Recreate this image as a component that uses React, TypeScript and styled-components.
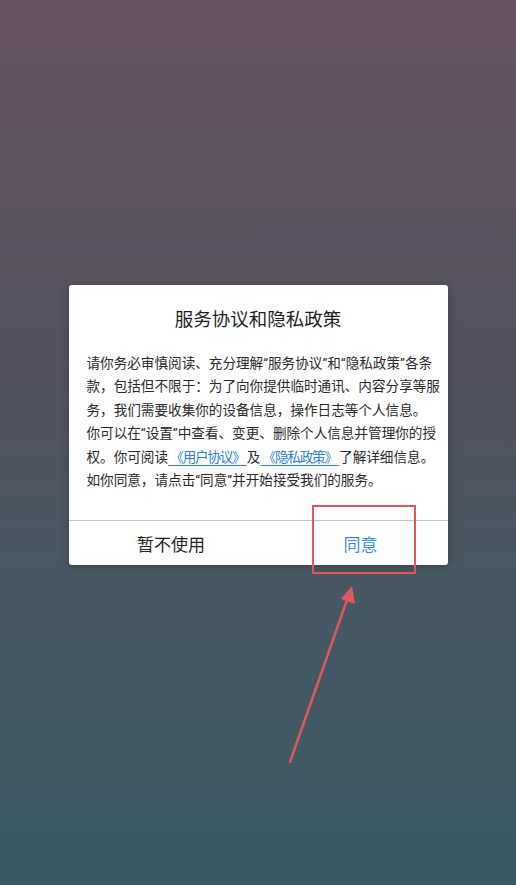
import React from 'react';
import styled, {createGlobalStyle} from 'styled-components';

const GlobalStyle = createGlobalStyle`
    html, body {
        margin: 0;
        padding: 0;
    }

    body {
        font-family: Roboto, 'Noto Sans CJK SC', sans-serif;
    }
`;

const Screen = styled.div`
    position: relative;
    width: 516px;
    height: 885px;
    overflow: hidden;
    background: linear-gradient(180deg, #665261 0%, #54525f 40%, #485863 65%, #3a5a66 100%);
    display: flex;
    flex-direction: column;
    align-items: center;
    padding-top: 285px;
    box-sizing: border-box;
`;

const Dialog = styled.div`
    width: 379px;
    background: #ffffff;
    border-radius: 3px;
    box-shadow: 0 2px 10px rgba(0, 0, 0, 0.25);
    display: flex;
    flex-direction: column;
`;

const Title = styled.h2`
    margin: 0;
    padding: 21px 0 0;
    height: 29px;
    line-height: 29px;
    text-align: center;
    font-size: 18.5px;
    font-weight: 400;
    color: #1e1e1e;
`;

const Message = styled.p`
    margin: 0;
    padding: 17px 10px 28px 18px;
    font-size: 13.6px;
    line-height: 23.4px;
    color: #2a2a2a;
    white-space: nowrap;
`;

const Link = styled.a`
    color: #2f7fd6;
    letter-spacing: -1.2px;
    text-decoration: underline;
    text-underline-offset: 3px;
`;

const Actions = styled.div`
    display: grid;
    grid-template-columns: 205px 1fr;
    height: 44px;
    border-top: 1px solid #c6c6c6;
`;

const ActionButton = styled.button<{$primary?: boolean}>`
    border: none;
    background: none;
    padding: 0;
    font-family: inherit;
    font-size: 17px;
    color: ${({$primary}) => ($primary ? '#3a8bde' : '#1e1e1e')};
    cursor: pointer;
`;

const Highlight = styled.div`
    position: absolute;
    left: 312px;
    top: 505px;
    width: 104px;
    height: 69px;
    box-sizing: border-box;
    border: 2px solid #e0585a;
`;

const Arrow = styled.svg`
    position: absolute;
    left: 0;
    top: 0;
    pointer-events: none;
`;

export default function App() {
	return (
		<>
			<GlobalStyle />
			<Screen>
				<Dialog>
					<Title>服务协议和隐私政策</Title>
					<Message>
						请你务必审慎阅读、充分理解“服务协议”和“隐私政策”各条
						<br />
						款，包括但不限于：为了向你提供临时通讯、内容分享等服
						<br />
						务，我们需要收集你的设备信息，操作日志等个人信息。
						<br />
						你可以在“设置”中查看、变更、删除个人信息并管理你的授
						<br />
						权。你可阅读<Link> 《用户协议》 </Link>及<Link> 《隐私政策》 </Link>了解详细信息。
						<br />
						如你同意，请点击“同意”并开始接受我们的服务。
					</Message>
					<Actions>
						<ActionButton>暂不使用</ActionButton>
						<ActionButton $primary>同意</ActionButton>
					</Actions>
				</Dialog>
				<Highlight />
				<Arrow width="516" height="885" viewBox="0 0 516 885">
					<line x1="290" y1="762" x2="347" y2="600" stroke="#e0585a" strokeWidth="2.5" strokeLinecap="round" />
					<polygon points="352,586 355,604 341,599" fill="#e0585a" />
				</Arrow>
			</Screen>
		</>
	);
}
